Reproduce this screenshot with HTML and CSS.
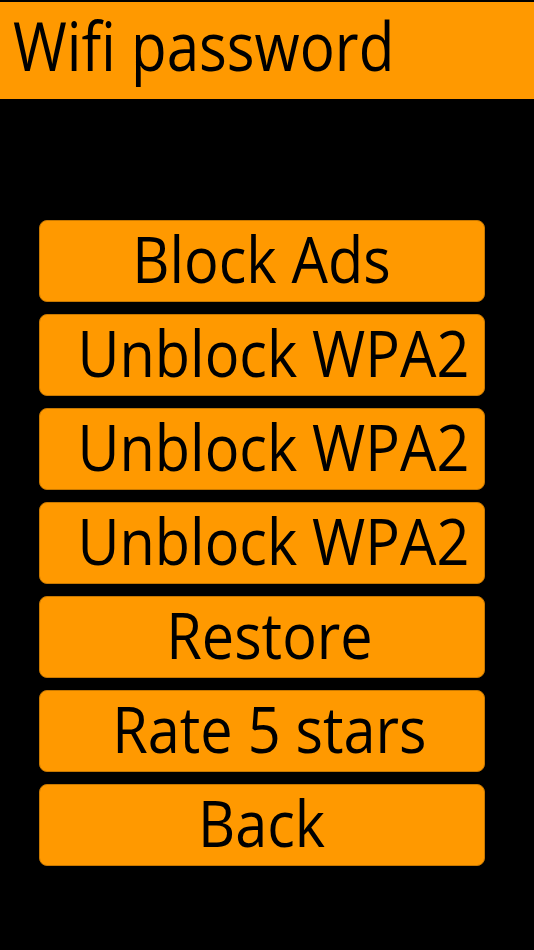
FILE: index.html
```
<!DOCTYPE html>
<html>
<head>
<meta charset="utf-8">
<title>Wifi password</title>
<link rel="stylesheet" href="styles.css">
</head>
<body>
<div class="topBar">
	<div class="topTitle">Wifi password</div>
</div>
<div class="menu">
	<div class="btItem"><span class="btText">Block Ads</span></div>
	<div class="btItem"><span class="btText">&nbsp;Unblock WPA2</span></div>
	<div class="btItem"><span class="btText">&nbsp;Unblock WPA2</span></div>
	<div class="btItem"><span class="btText">&nbsp;Unblock WPA2</span></div>
	<div class="btItem"><span class="btText">&nbsp;Restore</span></div>
	<div class="btItem"><span class="btText">&nbsp;Rate 5 stars</span></div>
	<div class="btItem"><span class="btText">Back</span></div>
</div>
</body>
</html>
```

FILE: styles.css
```
html, body {
	margin: 0;
	padding: 0;
	background: #000000;
}
body {
	width: 534px;
	height: 950px;
	overflow: hidden;
	font-family: "Open Sans", "Liberation Sans", sans-serif;
	color: #000000;
}
.topBar {
	box-sizing: border-box;
	margin-top: 2px;
	height: 97px;
	background: #ff9900;
	padding: 8px 0 0 13px;
}
.topTitle {
	width: 460px;
	font-size: 67px;
	line-height: 70px;
	transform: scaleX(0.87);
	transform-origin: left center;
	white-space: nowrap;
}
.menu {
	display: flex;
	flex-direction: column;
	gap: 12px;
	margin: 121px 49px 0 39px;
}
.btItem {
	box-sizing: border-box;
	height: 82px;
	background: #ff9900;
	border: 1px solid #c87800;
	border-radius: 8px;
	text-align: center;
	font-size: 64px;
	line-height: 75px;
	white-space: pre;
}
.btText {
	display: inline-block;
	transform: scaleX(0.9);
}
```
